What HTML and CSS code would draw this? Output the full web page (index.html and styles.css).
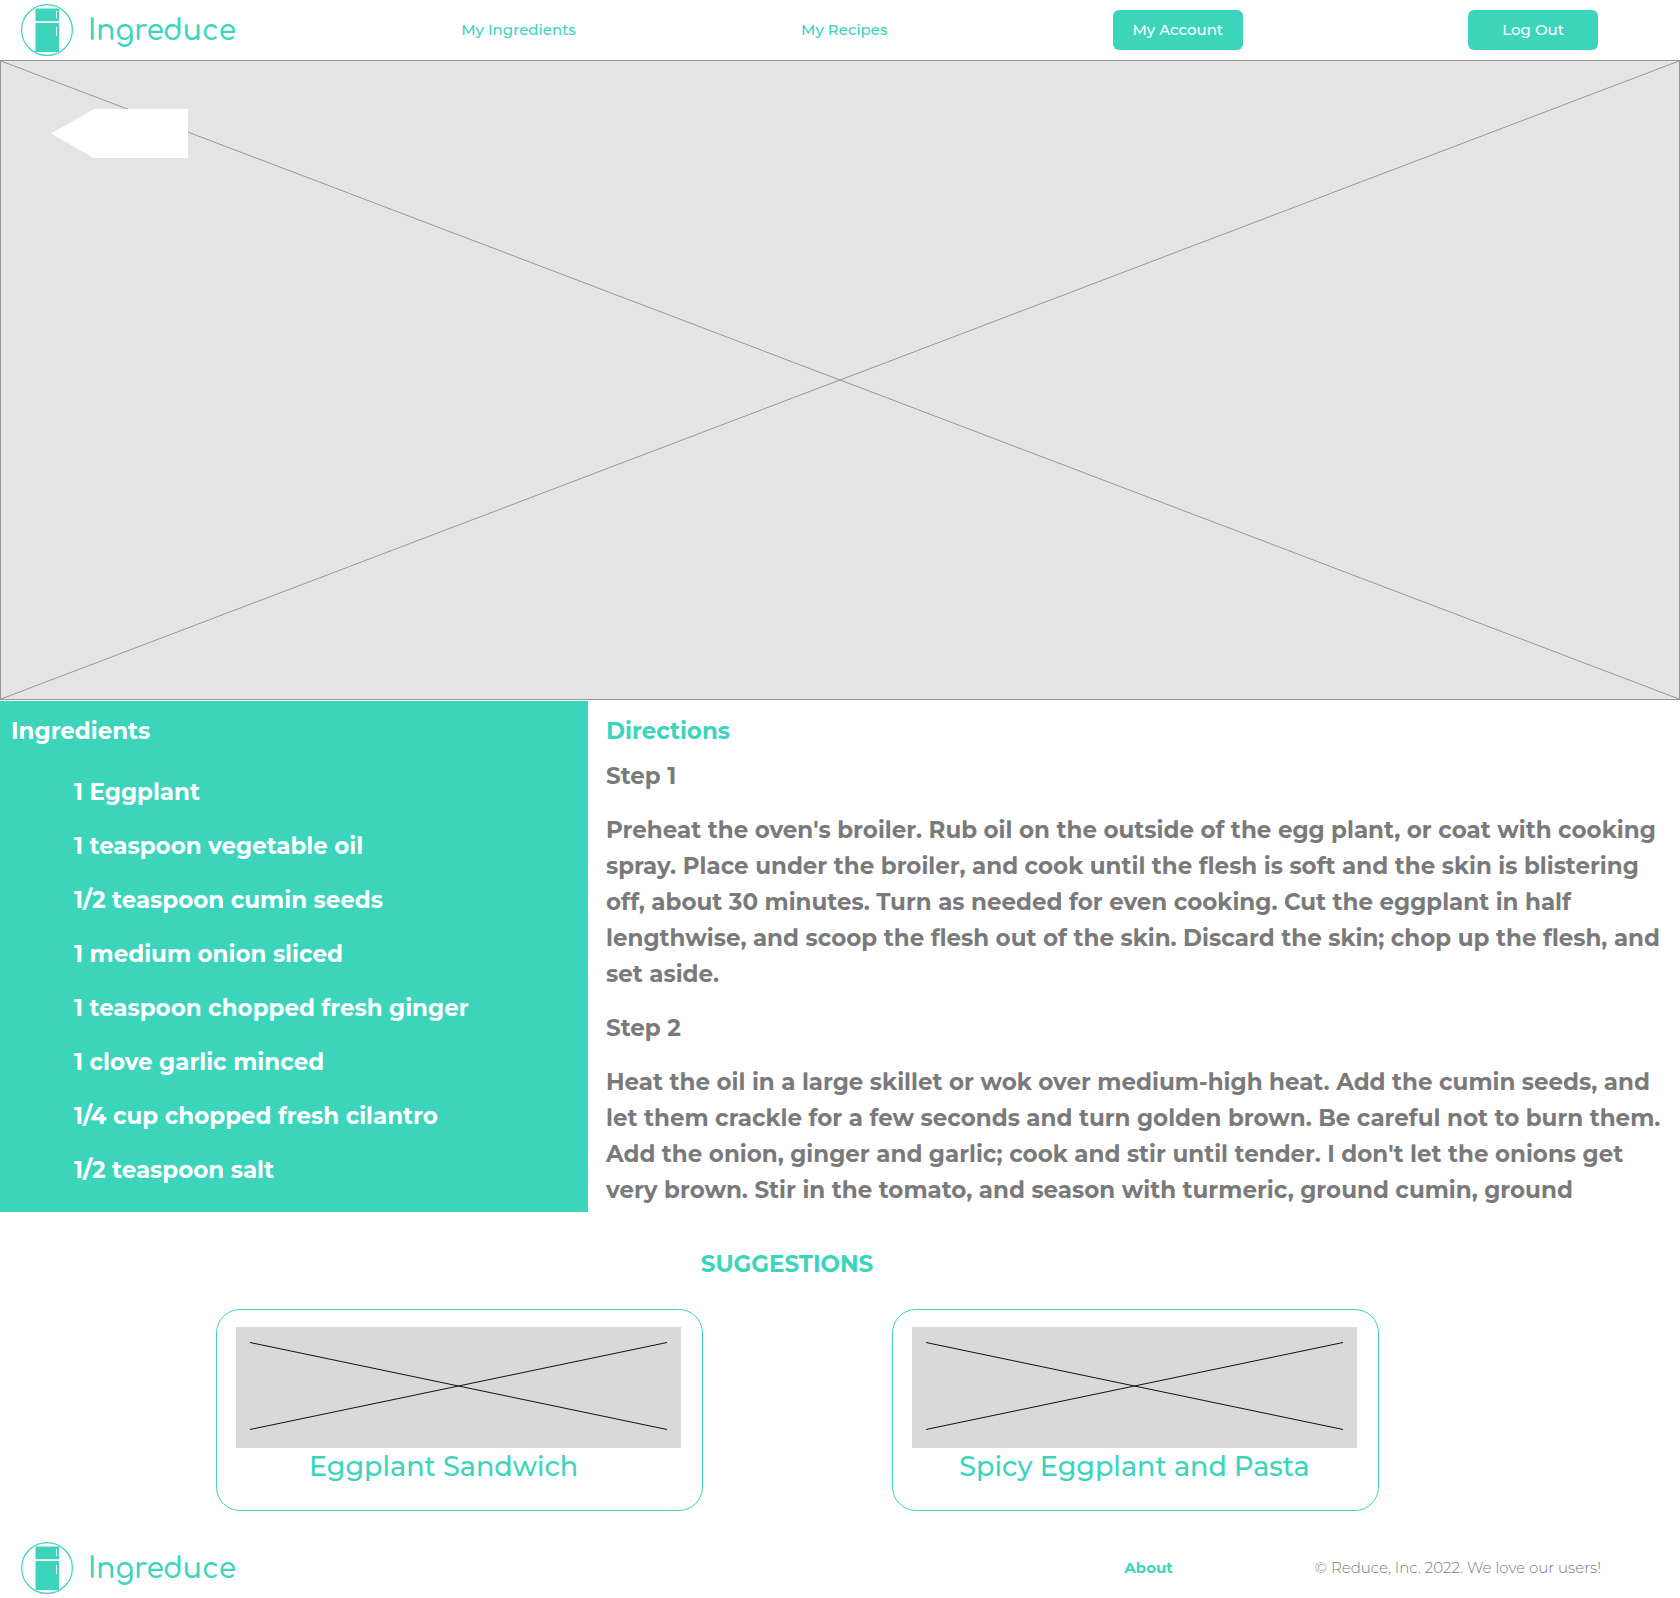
FILE: index.html
```html
<!DOCTYPE html>
<html lang="en">
<head>
<meta charset="utf-8">
<title>Ingreduce</title>
<link rel="stylesheet" href="styles.css">
</head>
<body>
<svg class="symbols" aria-hidden="true">
  <symbol id="fridge" viewBox="0 0 52 52">
    <circle cx="26" cy="26" r="25.4" fill="none" stroke="#3cd5bc" stroke-width="1.2"/>
    <rect x="14.5" y="4.5" width="23.5" height="12.8" rx="0.6" fill="#3cd5bc"/>
    <rect x="14.5" y="19" width="23.5" height="29" rx="0.6" fill="#3cd5bc"/>
    <path d="M35.5 7.4v6.2M35.5 23.4v8.2" stroke="#fff" stroke-width="1" stroke-linecap="round"/>
  </symbol>
</svg>
<header class="bar">
  <a class="brand" href="#"><svg class="brand-icon"><use href="#fridge"/></svg><span>Ingreduce</span></a>
  <a class="nav-link" href="#">My Ingredients</a>
  <a class="nav-link" href="#">My Recipes</a>
  <button class="button" type="button">My Account</button>
  <button class="button" type="button">Log Out</button>
</header>
<main>
  <div class="hero">
    <svg class="cross" preserveAspectRatio="none" viewBox="0 0 100 100">
      <path d="M0 0L100 100M100 0L0 100" vector-effect="non-scaling-stroke"/>
    </svg>
    <button class="back" type="button" aria-label="Back"></button>
  </div>
  <div class="recipe">
    <section class="ingredients">
      <h2>Ingredients</h2>
      <ul>
        <li>1 Eggplant</li>
        <li>1 teaspoon vegetable oil</li>
        <li>1/2 teaspoon cumin seeds</li>
        <li>1 medium onion sliced</li>
        <li>1 teaspoon chopped fresh ginger</li>
        <li>1 clove garlic minced</li>
        <li>1/4 cup chopped fresh cilantro</li>
        <li>1/2 teaspoon salt</li>
      </ul>
    </section>
    <section class="directions">
      <h2>Directions</h2>
      <h3>Step 1</h3>
      <p>Preheat the oven's broiler. Rub oil on the outside of the egg plant, or coat with cooking<br>
      spray. Place under the broiler, and cook until the flesh is soft and the skin is blistering<br>
      off, about 30 minutes. Turn as needed for even cooking. Cut the eggplant in half<br>
      lengthwise, and scoop the flesh out of the skin. Discard the skin; chop up the flesh, and<br>
      set aside.</p>
      <h3>Step 2</h3>
      <p>Heat the oil in a large skillet or wok over medium-high heat. Add the cumin seeds, and<br>
      let them crackle for a few seconds and turn golden brown. Be careful not to burn them.<br>
      Add the onion, ginger and garlic; cook and stir until tender. I don't let the onions get<br>
      very brown. Stir in the tomato, and season with turmeric, ground cumin, ground</p>
    </section>
  </div>
  <section class="suggestions">
    <h2>SUGGESTIONS</h2>
    <div class="cards">
      <a class="card" href="#">
        <svg class="thumb" preserveAspectRatio="none" viewBox="0 0 445 121"><path d="M14 15.5L431 102.5M431 15.5L14 102.5"/></svg>
        <span class="caption caption-short">Eggplant Sandwich</span>
      </a>
      <a class="card" href="#">
        <svg class="thumb" preserveAspectRatio="none" viewBox="0 0 445 121"><path d="M14 15.5L431 102.5M431 15.5L14 102.5"/></svg>
        <span class="caption">Spicy Eggplant and Pasta</span>
      </a>
    </div>
  </section>
</main>
<footer class="bar footer">
  <a class="brand" href="#"><svg class="brand-icon"><use href="#fridge"/></svg><span>Ingreduce</span></a>
  <a class="about" href="#">About</a>
  <small class="legal">© Reduce, Inc. 2022. We love our users!</small>
</footer>
</body>
</html>
```
FILE: styles.css
```css
* { box-sizing: border-box; }

body {
  margin: 0;
  background: #fefefe;
  color: #7a7a7a;
  font: 700 23px/36px Montserrat, Inter, sans-serif;
}

h2, h3, p, ul { margin: 0; padding: 0; font-size: 23px; font-weight: 700; }
a { color: #3cd5bc; text-decoration: none; }
.symbols { position: absolute; width: 0; height: 0; }

.bar {
  display: flex;
  align-items: center;
  justify-content: space-between;
  height: 60px;
  padding: 0 82px 0 21px;
}
.brand {
  display: flex;
  align-items: center;
  gap: 15px;
  font: 600 28px/40px Comfortaa, Quicksand, Lato, sans-serif;
}
.brand-icon { width: 52px; height: 52px; }
.brand span { padding-top: 2px; }
.nav-link { font-size: 15px; font-weight: 500; line-height: 20px; }
.button {
  width: 130px;
  height: 40px;
  border: 0;
  border-radius: 6px;
  padding: 0;
  background: #3cd5bc;
  color: #fff;
  font: 500 15px/20px Montserrat, Inter, sans-serif;
}

.hero {
  position: relative;
  aspect-ratio: 1680 / 640;
  border: 1px solid #979797;
  background: #e4e4e4;
}
.cross { display: block; width: 100%; height: 100%; }
.cross path { stroke: #979797; stroke-width: 1; fill: none; }
.back {
  position: absolute;
  left: 50px;
  top: 48px;
  width: 137px;
  height: 49px;
  border: 0;
  background: #fff;
  clip-path: polygon(0 50%, 43px 0, 100% 0, 100% 100%, 43px 100%);
}

.recipe {
  display: grid;
  grid-template-columns: 35% 65%;
  margin-top: 1px;
}
.ingredients { padding: 12px 11px 24px; background: #3cd5bc; color: #fff; }
.ingredients ul {
  display: grid;
  gap: 18px;
  padding: 25px 0 0 63px;
  list-style: none;
}
.directions { padding: 12px 0 0 18px; white-space: nowrap; }
.directions h2 { margin-bottom: 9px; color: #3cd5bc; }
.directions h3 { margin-bottom: 18px; }
.directions p + h3 { margin-top: 18px; }

.suggestions { padding: 34px 0 27px; }
.suggestions h2 { margin-right: 106px; text-align: center; color: #3cd5bc; }
.cards {
  display: flex;
  gap: 189px;
  margin-top: 27px;
  padding-left: 216px;
}
.card {
  flex: 0 0 487px;
  height: 202px;
  padding: 17px 21px 0 19px;
  border: 1px solid #3cd5bc;
  border-radius: 24px;
  font-size: 27px;
  font-weight: 500;
  line-height: 38px;
  text-align: center;
}
.thumb { display: block; width: 100%; height: 121px; background: #d9d9d9; }
.thumb path { stroke: #111; stroke-width: 1; fill: none; }
.caption { display: block; }
.caption-short { padding-right: 30px; }

.footer { padding-right: 79px; justify-content: flex-start; }
.about { margin-left: auto; font-size: 15px; font-weight: 700; line-height: 20px; }
.legal { margin-left: 142px; font-size: 15px; font-weight: 300; line-height: 20px; }
```
